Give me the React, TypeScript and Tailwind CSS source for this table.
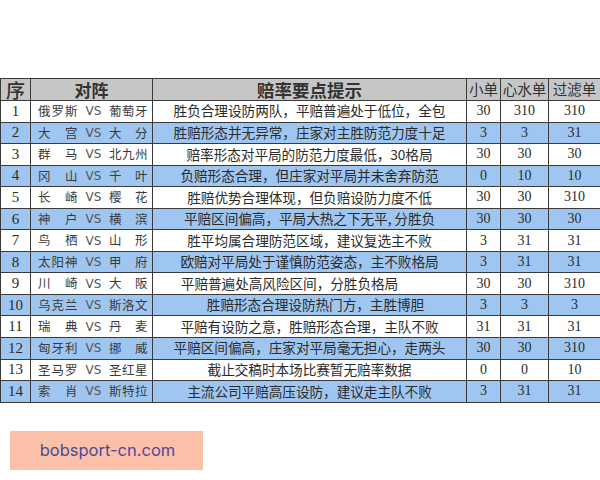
import React from "react";

type Row = { t1: string; t2: string; d: string; a: string; b: string; c: string; off?: number };

const rows: Row[] = [
  { t1: "俄罗斯", t2: "葡萄牙", d: "胜负合理设防两队，平赔普遍处于低位，全包", a: "30", b: "310", c: "310" },
  { t1: "大　宫", t2: "大　分", d: "胜赔形态并无异常，庄家对主胜防范力度十足", a: "3", b: "3", c: "31" },
  { t1: "群　马", t2: "北九州", d: "赔率形态对平局的防范力度最低，30格局", a: "30", b: "30", c: "30" },
  { t1: "冈　山", t2: "千　叶", d: "负赔形态合理，但庄家对平局并未舍弃防范", a: "0", b: "10", c: "10" },
  { t1: "长　崎", t2: "樱　花", d: "胜赔优势合理体现，但负赔设防力度不低", a: "30", b: "30", c: "310" },
  { t1: "神　户", t2: "横　滨", d: "平赔区间偏高，平局大热之下无平, 分胜负", a: "30", b: "30", c: "30" },
  { t1: "鸟　栖", t2: "山　形", d: "胜平均属合理防范区域，建议复选主不败", a: "3", b: "31", c: "31" },
  { t1: "太阳神", t2: "甲　府", d: "欧赔对平局处于谨慎防范姿态，主不败格局", a: "3", b: "31", c: "31" },
  { t1: "川　崎", t2: "大　阪", d: "平赔普遍处高风险区间，分胜负格局", a: "30", b: "30", c: "310", off: -20 },
  { t1: "乌克兰", t2: "斯洛文", d: "胜赔形态合理设防热门方，主胜博胆", a: "3", b: "3", c: "3", off: 6 },
  { t1: "瑞　典", t2: "丹　麦", d: "平赔有设防之意，胜赔形态合理，主队不败", a: "31", b: "31", c: "31" },
  { t1: "匈牙利", t2: "挪　威", d: "平赔区间偏高，庄家对平局毫无担心，走两头", a: "30", b: "30", c: "310" },
  { t1: "圣马罗", t2: "圣红星", d: "截止交稿时本场比赛暂无赔率数据", a: "0", b: "0", c: "10" },
  { t1: "索　肖", t2: "斯特拉", d: "主流公司平赔高压设防，建议走主队不败", a: "3", b: "31", c: "31" },
];

const cjk = { fontFamily: '"Noto Sans CJK SC", "Noto Sans", sans-serif' };
const serif = { fontFamily: '"Liberation Serif", "Noto Sans CJK SC", serif' };

export default function App() {
  return (
    <div className="w-[600px] h-[480px] bg-white relative overflow-hidden">
      <div className="pt-[78px]">
        <table className="table-fixed border-collapse w-[600px] text-[#2b2b2b]">
          <colgroup>
            <col className="w-[30px]" />
            <col className="w-[122px]" />
            <col className="w-[314px]" />
            <col className="w-[34px]" />
            <col className="w-[48px]" />
            <col className="w-[52px]" />
          </colgroup>
          <thead>
            <tr className="h-[22px] bg-[#c6c6c6]">
              <th className="border border-[#3a3a3a] p-0 text-[19px] leading-none font-medium text-[#333]" style={cjk}>序</th>
              <th className="border border-[#3a3a3a] p-0 text-[17px] leading-none font-bold text-[#333]" style={cjk}>对阵</th>
              <th className="border border-[#3a3a3a] p-0 text-[17.5px] leading-none font-bold text-[#333]" style={cjk}>赔率要点提示</th>
              <th className="border border-[#3a3a3a] p-0 text-[14.5px] leading-none font-normal text-[#333] whitespace-nowrap" style={cjk}>小单</th>
              <th className="border border-[#3a3a3a] p-0 text-[14.5px] leading-none font-normal text-[#333] whitespace-nowrap" style={cjk}>心水单</th>
              <th className="border border-[#3a3a3a] p-0 text-[14.5px] leading-none font-normal text-[#333] whitespace-nowrap" style={cjk}>过滤单</th>
            </tr>
          </thead>
          <tbody>
            {rows.map((r, i) => (
              <tr key={i} className={i % 2 === 1 ? "h-[21.55px] bg-[#9fc6f1]" : "h-[21.55px] bg-white"}>
                <td className="border border-[#3a3a3a] p-0 text-center text-[15px] leading-none" style={serif}>{i + 1}</td>
                <td className="border border-[#3a3a3a] p-0">
                  <div className="flex items-center pl-[7px] pr-[4px] text-[12.5px] leading-none text-[#3a3a3a]" style={cjk}>
                    <span className="whitespace-pre tracking-[1px]">{r.t1}</span>
                    <span className="ml-[7px] text-[12px] text-[#555]" style={{ fontFamily: '"DejaVu Sans", sans-serif' }}>VS</span>
                    <span className="ml-auto whitespace-pre tracking-[0.5px]">{r.t2}</span>
                  </div>
                </td>
                <td className="border border-[#3a3a3a] p-0">
                  <div
                    className="text-center text-[13.7px] leading-none whitespace-nowrap tracking-[-0.1px]"
                    style={{ ...cjk, transform: r.off ? `translateX(${r.off}px)` : undefined }}
                  >
                    {r.d}
                  </div>
                </td>
                <td className="border border-[#3a3a3a] p-0 text-center text-[14px] leading-none" style={serif}>{r.a}</td>
                <td className="border border-[#3a3a3a] p-0 text-center text-[14px] leading-none" style={serif}>{r.b}</td>
                <td className="border border-[#3a3a3a] p-0 text-center text-[14px] leading-none" style={serif}>{r.c}</td>
              </tr>
            ))}
          </tbody>
        </table>
      </div>
      <div className="absolute left-[10px] top-[431px] w-[193px] h-[39px] bg-[#fcc0a9] flex items-center justify-center">
        <span className="text-[16.5px] text-[#4b4a9a] pl-[2px]" style={{ fontFamily: '"Inter", "Noto Sans", sans-serif' }}>
          bobsport-cn.com
        </span>
      </div>
    </div>
  );
}
